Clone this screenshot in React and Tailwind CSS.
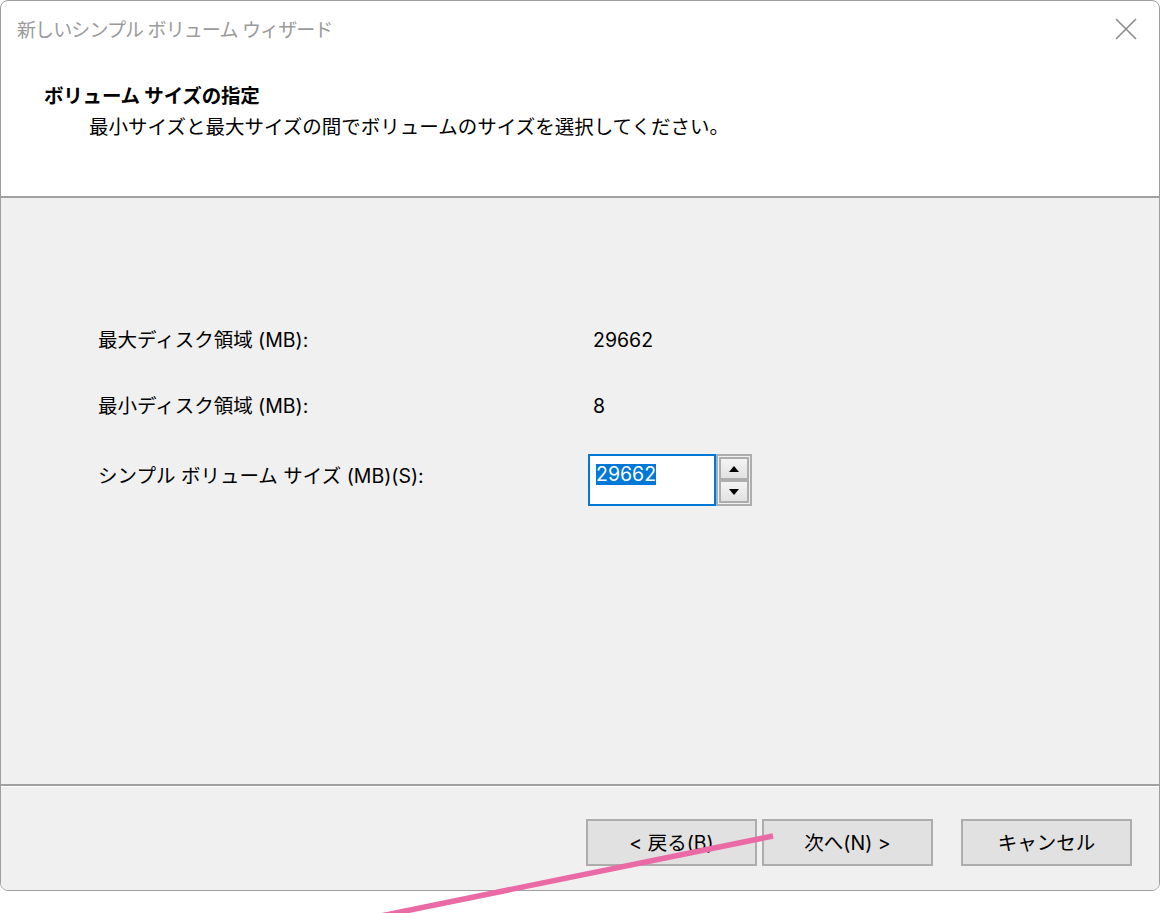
import React from 'react';

const font = { fontFamily: 'Inter, "Noto Sans CJK JP", "Noto Sans", sans-serif' };

function SpinButton({ up }) {
  return (
    <div className="flex-1 flex items-center justify-center border-2 border-[#adadad] bg-gradient-to-b from-[#f4f4f4] to-[#e2e2e2]">
      <svg width="10" height="6" viewBox="0 0 10 6">
        {up ? <path d="M5 0 L10 6 L0 6 Z" fill="#000" /> : <path d="M0 0 L10 0 L5 6 Z" fill="#000" />}
      </svg>
    </div>
  );
}

function WizardButton({ children }) {
  return (
    <button className="h-[47px] w-[171px] border-2 border-[#adadad] bg-[#e1e1e1] pt-[3px] text-[19.5px] leading-none text-black">
      {children}
    </button>
  );
}

export default function App() {
  return (
    <div className="relative w-[1160px] h-[913px] bg-white overflow-hidden" style={font}>
      <div className="w-[1160px] h-[891px] flex flex-col border border-[#9e9e9e] rounded-[8px] overflow-hidden bg-white">
        {/* title bar */}
        <div className="h-[59px] flex items-center justify-between pl-[16px] pr-[22px]">
          <span className="text-[19px] tracking-[-0.9px] text-[#9a9a9a] leading-none">新しいシンプル ボリューム ウィザード</span>
          <svg width="22" height="22" viewBox="0 0 22 22" className="-mt-[4px]">
            <path d="M1 1 L21 21 M21 1 L1 21" stroke="#8a8a8a" strokeWidth="1.6" />
          </svg>
        </div>

        {/* header */}
        <div className="h-[136px] pt-[21px] text-[19.5px] leading-[31px] text-black">
          <div className="pl-[43px] font-bold tracking-[-0.2px]">ボリューム サイズの指定</div>
          <div className="pl-[88px]">最小サイズと最大サイズの間でボリュームのサイズを選択してください。</div>
        </div>
        <div className="h-[2px] bg-[#a0a0a0]" />

        {/* body */}
        <div className="h-[586px] bg-[#f0f0f0] pl-[97px] pt-[128px] text-[19.5px] text-black">
          <div className="flex h-[30px] items-center">
            <span className="w-[495px]">最大ディスク領域 (MB):</span>
            <span>29662</span>
          </div>
          <div className="flex h-[30px] items-center mt-[36px]">
            <span className="w-[495px]">最小ディスク領域 (MB):</span>
            <span>8</span>
          </div>
          <div className="flex items-start mt-[32px]">
            <span className="w-[490px] h-[30px] leading-[30px] mt-[7px]">シンプル ボリューム サイズ (MB)(S):</span>
            <div className="w-[128px] h-[52px] border-2 border-[#0078d7] bg-white pl-[6px] pt-[4px]">
              <span className="inline-block bg-[#0078d7] text-white leading-[21px] h-[21px]">29662</span>
            </div>
            <div className="w-[36px] h-[52px] border-2 border-[#adadad] bg-[#f0f0f0] p-[1px] flex flex-col">
              <SpinButton up />
              <SpinButton />
            </div>
          </div>
        </div>
        <div className="h-[2px] bg-[#a0a0a0]" />
        <div className="h-[1px] bg-white" />

        {/* footer */}
        <div className="flex-1 bg-[#f0f0f0] flex items-start pt-[32px] pl-[585px]">
          <WizardButton>&lt; 戻る(B)</WizardButton>
          <div className="ml-[5px]">
            <WizardButton>次へ(N) &gt;</WizardButton>
          </div>
          <div className="ml-[28px]">
            <WizardButton>キャンセル</WizardButton>
          </div>
        </div>
      </div>

      {/* annotation line */}
      <svg className="absolute inset-0 pointer-events-none" width="1160" height="913" viewBox="0 0 1160 913">
        <line x1="773" y1="836" x2="263" y2="940" stroke="#e96aa5" strokeWidth="5.5" />
      </svg>
    </div>
  );
}
